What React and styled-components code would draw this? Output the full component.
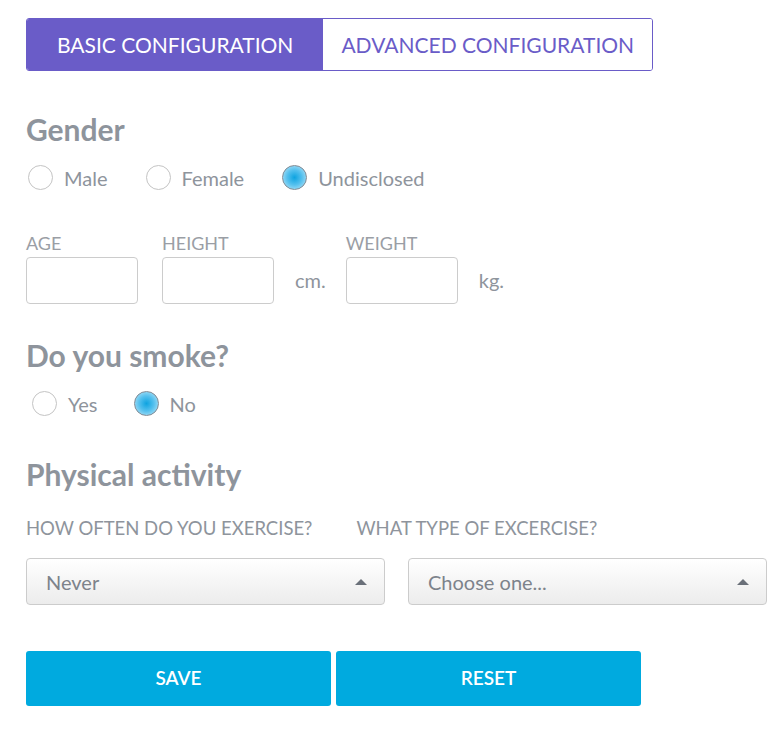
import React from "react";
import styled, { createGlobalStyle } from "styled-components";

const GlobalStyle = createGlobalStyle`
  body {
    margin: 0;
    background: #ffffff;
    font-family: Lato, "Open Sans", sans-serif;
  }
`;

export default function App() {
  return (
    <Page>
      <GlobalStyle />
      <Tabs>
        <Tab $active>BASIC CONFIGURATION</Tab>
        <Tab>ADVANCED CONFIGURATION</Tab>
      </Tabs>

      <SectionTitle>Gender</SectionTitle>
      <RadioGroup $indent={2} $gap={38}>
        <RadioOption>
          <RadioCircle />
          Male
        </RadioOption>
        <RadioOption>
          <RadioCircle />
          Female
        </RadioOption>
        <RadioOption>
          <RadioCircle $checked />
          Undisclosed
        </RadioOption>
      </RadioGroup>

      <MeasureRow>
        <Field>
          <FieldLabel>AGE</FieldLabel>
          <TextBox />
        </Field>
        <Field>
          <FieldLabel>HEIGHT</FieldLabel>
          <TextBox />
        </Field>
        <Unit>cm.</Unit>
        <Field>
          <FieldLabel>WEIGHT</FieldLabel>
          <TextBox />
        </Field>
        <Unit>kg.</Unit>
      </MeasureRow>

      <SectionTitle $top={33}>Do you smoke?</SectionTitle>
      <RadioGroup $indent={6} $gap={36}>
        <RadioOption>
          <RadioCircle />
          Yes
        </RadioOption>
        <RadioOption>
          <RadioCircle $checked />
          No
        </RadioOption>
      </RadioGroup>

      <SectionTitle>Physical activity</SectionTitle>
      <QuestionRow>
        <QuestionLabel>HOW OFTEN DO YOU EXERCISE?</QuestionLabel>
        <QuestionLabel>WHAT TYPE OF EXCERCISE?</QuestionLabel>
      </QuestionRow>
      <SelectRow>
        <SelectBox>
          Never
          <Caret />
        </SelectBox>
        <SelectBox>
          Choose one...
          <Caret />
        </SelectBox>
      </SelectRow>

      <ButtonRow>
        <ActionButton>SAVE</ActionButton>
        <ActionButton>RESET</ActionButton>
      </ButtonRow>
    </Page>
  );
}

const Page = styled.div`
  padding: 18px 16px 20px 26px;
  color: #8e949c;
`;

const Tabs = styled.div`
  display: inline-flex;
  border: 1px solid #6a5cc8;
  border-radius: 3px;
  overflow: hidden;
`;

const Tab = styled.div`
  padding: 0 ${(p) => (p.$active ? 30 : 18)}px;
  height: 51px;
  display: flex;
  align-items: center;
  font-size: 21px;
  background: ${(p) => (p.$active ? "#6a5cc8" : "#ffffff")};
  color: ${(p) => (p.$active ? "#ffffff" : "#6a5cc8")};
`;

const SectionTitle = styled.h2`
  margin: ${(p) => p.$top ?? 40}px 0 18px;
  font-size: 30px;
  line-height: 36px;
  font-weight: 700;
  color: #8e949c;
`;

const RadioGroup = styled.div`
  display: flex;
  gap: ${(p) => p.$gap}px;
  padding-left: ${(p) => p.$indent}px;
`;

const RadioOption = styled.label`
  display: flex;
  align-items: center;
  gap: 11px;
  font-size: 20px;
  color: #8e949c;
`;

const RadioCircle = styled.span`
  width: 23px;
  height: 23px;
  border-radius: 50%;
  border: 1px solid ${(p) => (p.$checked ? "#7f8a94" : "#c4c4c4")};
  background: ${(p) =>
    p.$checked
      ? "radial-gradient(circle, #0ea3e0 0%, #54c0ee 45%, #bfe7f8 95%)"
      : "#ffffff"};
`;

const MeasureRow = styled.div`
  display: flex;
  align-items: flex-end;
  gap: 24px;
  margin-top: 43px;
`;

const Field = styled.div`
  display: flex;
  flex-direction: column;
  gap: 4px;
`;

const FieldLabel = styled.div`
  font-size: 18px;
  line-height: 20px;
  color: #9a9ea5;
`;

const QuestionLabel = styled(FieldLabel)`
  font-size: 18.5px;
  color: #8e949c;
`;

const TextBox = styled.input`
  width: 110px;
  height: 45px;
  box-sizing: content-box;
  padding: 0;
  border: 1px solid #cccccc;
  border-radius: 4px;
`;

const Unit = styled.span`
  font-size: 20px;
  color: #8e949c;
  line-height: 47px;
  margin-left: -3px;
  margin-right: -4px;
`;

const QuestionRow = styled.div`
  display: flex;
  gap: 44px;
  margin-top: 26px;
`;

const SelectRow = styled.div`
  display: grid;
  grid-template-columns: 359px 359px;
  gap: 23px;
  margin-top: 20px;
`;

const SelectBox = styled.div`
  position: relative;
  height: 45px;
  display: flex;
  align-items: center;
  padding-left: 19px;
  border: 1px solid #cccccc;
  border-radius: 4px;
  background: linear-gradient(#ffffff, #ececec);
  font-size: 20px;
  color: #7d838b;
`;

const Caret = styled.span`
  position: absolute;
  right: 17px;
  top: 20px;
  width: 0;
  height: 0;
  border-left: 6px solid transparent;
  border-right: 6px solid transparent;
  border-bottom: 6px solid #6a7079;
`;

const ButtonRow = styled.div`
  display: flex;
  gap: 5px;
  margin-top: 46px;
`;

const ActionButton = styled.button`
  width: 305px;
  height: 55px;
  padding-bottom: 4px;
  border: none;
  border-radius: 3px;
  background: #00aadf;
  color: #ffffff;
  font-family: inherit;
  font-size: 19px;
  font-weight: 600;
`;
